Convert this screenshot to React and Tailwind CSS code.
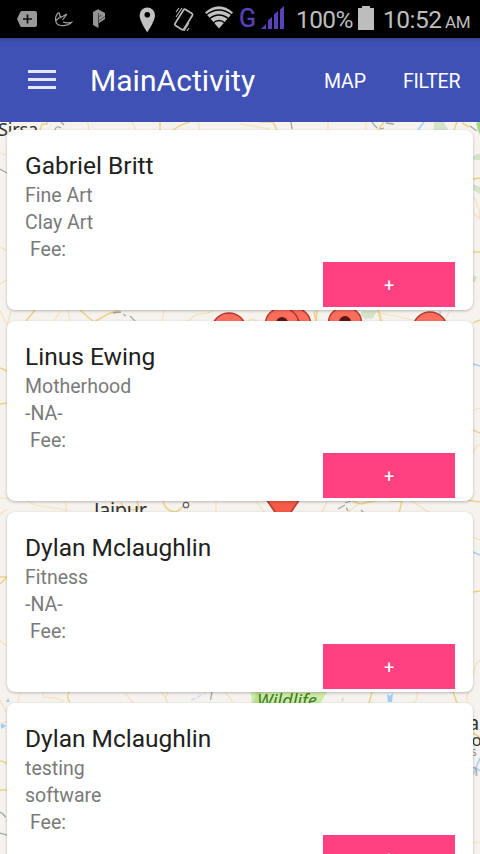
import React from "react";

const people = [
  { name: "Gabriel Britt", category: "Fine Art", detail: "Clay Art" },
  { name: "Linus Ewing", category: "Motherhood", detail: "-NA-" },
  { name: "Dylan Mclaughlin", category: "Fitness", detail: "-NA-" },
  { name: "Dylan Mclaughlin", category: "testing", detail: "software" },
];

function Pin({ x, y }) {
  return (
    <g transform={`translate(${x} ${y})`}>
      <path d="M0 46C-3 32-16.5 28-16.5 15.500A16.500 15.500 0 0 1 16.500 15.500C16.500 28 3 32 0 46Z" fill="#fb6e5e" stroke="#b43a2c" strokeWidth="1.500" />
      <circle cx="0" cy="15" r="6" fill="#5d1611" />
    </g>
  );
}

function MapBackground() {
  return (
    <svg className="absolute inset-0" width="480" height="732" viewBox="0 122 480 732" fill="none">
      <rect y="122" width="480" height="732" fill="#f6f2ee" />
      <path d="M477 122h3v11l-3-2zM473 157l4-3h3v6h-7zM473 184l7 3v7l-7-4zM473 275l4 2-2 5h-2zM434 122h10l4 8h-14zM362 311h15l-4 7-8 1-5-4z" fill="#d3e4ca" />
      <path d="M476 123l4-1v13z" fill="#a6d68a" />
      <path d="M251 692h76l-8 14h-67z" fill="#cfe9a9" />
      <path d="M256 692h7l-4 5 3 9h-9z" fill="#b9df93" />
      <path d="M341 700l3-3-1 5z" fill="#c7e2b9" />
      <g stroke="#f5e2bd" strokeWidth="1.200">
        <path d="M87 122q3 4 1 8M132 122l4 8M198 122l2 8M240 124l30 5M328 122v8M366 122v8M0 153l7 2M0 247l7 4M0 311l7 14M11 311l-4 14M0 284l7-4M61 311l-9 12M68 310l2 12M164 310l-2 12M187 322l8-7 13-2 7-4M247 322l5-3 8 3M375 312l30 6 15 4M380 311l2 10M450 311l-6 10M0 498l25 2 10 5 32 5M65 500l2 12M0 514l7-5M216 501v11M256 501l9 12M327 501l-5 11M348 512l10-8 20-3M412 501l18 12M473 537l7 3M20 693l-2 9M43 692l1 5 12 1 8 3M125 693l8 10M162 692l6 11M168 692l-3 8M225 692l8 10M417 692v7l-3 4M468 692q-2 5-1 11M473 675q2-12 7-15M473 213l7 6q-1-15-7-23M473 410l7-2M473 454q2-8 7-10M0 641l7 5M0 700l7 13M0 725l7-4M473 843l7-1" />
      </g>
      <g stroke="#ecd38c" strokeWidth="1.500">
        <path d="M40 130l2-6h5v-2M160 122v8M173 130q8-6 17-8M260 122h13l4 8M378 130l6-8M457 122l-3 8M462 123l7 4M473 179l7-1M473 252h7M35 310l-9 11M80 310l14 12 14-8 11-4M314 311l2 11M317 310l-1 12M378 310l3 12M473 323l7-3M0 368l7 3M0 404l7-1M121 502l3 7M137 501l2 7q-6 4-12-1M163 500q1 10 12 12 6-2 8-6M352 501l9 3 17-4M390 501h12l-3 12M465 500l15 2M473 430l7 3M0 577h7l-7 7M69 692q-3 6 1 10M372 692l-3 11M453 692l4 11M473 592l7-1M473 733l7 4M0 761q4 0 7 3M0 790h7" />
      </g>
      <g stroke="#a5a5a5" strokeWidth="1.300" strokeDasharray="8 3">
        <path d="M0 169l7 4M61 122l3 3M55 130q1-5 6-2M291 122l1 7M372 122q5 9 12 6M386 123l8 1M470 126l8 6M113 313l7-1 6 4M130 316l6 6M338 509l7-4 3 6M345 503l6-2M361 510l3 3M212 692l-2 11M0 812q5 2 7 9M0 833l7 2" />
      </g>
      <path d="M418 130l6-8M440 311v8M473 364l7 2M473 552l7 3M473 775l7-17M480 771l-5-4" stroke="#a9cffb" strokeWidth="1.600" />
      <path d="M191 700l7-3 7-4" stroke="#cfe1f8" strokeWidth="1.600" strokeDasharray="5 2" />
      <path d="M387 694l1 8h4l1-9-3 3zM6 702l2-4 2 4zM1 723l5 3-5 3z" fill="#9ecbfb" />
      <circle cx="186" cy="505" r="2.700" fill="#fff" stroke="#666" strokeWidth="1.300" />
      <g fontFamily="Noto Sans, sans-serif" fill="#333">
        <text x="-2" y="136" fontSize="18" textLength="40">Sirsa</text>
        <text x="94" y="517" fontSize="20" textLength="53">Jaipur</text>
        <text x="257" y="706.500" fontSize="18.500" fontStyle="italic" fill="#38801b" textLength="60" lengthAdjust="spacingAndGlyphs">Wildlife</text>
        <text x="468" y="729.500" fontSize="20">a</text>
        <text x="471.500" y="746" fontSize="17">o</text>
        <text x="471" y="756" fontSize="12" fill="#999">s</text>
        <text x="468" y="776" fontSize="17" fill="#aaa">n</text>
      </g>
      <Pin x={229} y={313} />
      <Pin x={294} y={308} />
      <Pin x={282} y={308} />
      <Pin x={345} y={307} />
      <Pin x={430} y={312} />
      <path d="M266 499l11 16h12l11-16z" fill="#f65b49" stroke="#b43a2c" strokeWidth="1.500" />
    </svg>
  );
}

function StatusBar() {
  return (
    <div className="flex h-[38px] w-full shrink-0 bg-black">
      <svg width="288" height="38" viewBox="0 0 288 38" fill="none" className="shrink-0">
        <path d="M22 11h13q2 0 2 2v12q0 2-2 2H22q-1.500 0-2-1.500L17 19l3-6.500q.5-1.500 2-1.500z" fill="#999" />
        <path d="M23 19h9M27.500 14.500v9" stroke="#111" strokeWidth="1.700" />
        <path d="M58.500 12.500C54 17 54.500 25 61 25.500c5 .3 9-1.500 10.500-3.200-3 .8-6 .6-8.500-.3M59 12.500l1.500 5 6.500-3.500-4.500 6M56 20.500l3.500-3" stroke="#a0a0a0" strokeWidth="1.200" />
        <path d="M93 12l5.500-3v19l-5.500-3zM98.500 9.500l6.500 3.500v6l-6.500 4.500z" fill="#959595" />
        <path d="M98.500 13v12M98.500 17l3-2M98.500 21l6-4.500" stroke="#333" strokeWidth=".8" />
        <path fillRule="evenodd" d="M147.300 7.500a7.700 7.700 0 0 0-7.700 7.700c0 6 7.700 17 7.700 17s7.700-11 7.700-17a7.700 7.700 0 0 0-7.700-7.700zm0 4.400a2.800 2.800 0 1 1 0 5.600 2.800 2.800 0 0 1 0-5.600z" fill="#c2c2c2" />
        <g stroke="#bbb">
          <rect x="-5.200" y="-9.500" width="10.400" height="19" rx="1.500" transform="translate(183.700 19.500) rotate(32)" strokeWidth="1.700" />
          <path d="M176 17l6-9M176 12l3-4M184 31l5-8M187 31l2-3" strokeWidth="1.100" />
        </g>
        <path d="M205 12.500Q219 0 233 12.500L219 28.500z" fill="#c2c2c2" />
        <path d="M206 15q13-10 26 0M209 19q10-8 20 0M213 23q6-5 12 0" stroke="#000" strokeWidth="1.300" />
        <path d="M261 29l5-5v5zM268 29v-8.500l4-3.500v12zM274 29V14.500l4-3.500v18zM280 29V9.500l4-3.500v23z" fill="#5b42bb" />
        <text x="239" y="27" fontFamily="Roboto, sans-serif" fontSize="25" fill="#5b42bb" stroke="#5b42bb" strokeWidth=".3" textLength="17" lengthAdjust="spacingAndGlyphs">G</text>
      </svg>
      <div className="flex h-[38px] items-baseline whitespace-pre pl-[8px] pt-[4px] text-[24.500px] leading-[30px] text-[#bdbdbd]">
        <span className="w-[62px] tracking-[-0.6px]">100%</span>
        <svg width="16" height="24" viewBox="0 0 16 24" className="relative top-0.5 shrink-0"><path d="M4 0h8v2h4v22H0V2h4z" fill="#bdbdbd" /></svg>
        <span className="ml-[9px] w-[60px] tracking-[-0.5px]">10:52</span>
        <span className="ml-0.5 text-[17px] tracking-[-0.3px]">AM</span>
      </div>
    </div>
  );
}

function Card({ person }) {
  return (
    <article className="flex h-[180px] shrink-0 flex-col rounded-[8px] bg-white px-[18px] shadow-[0_1px_3px_rgba(0,0,0,0.25)]">
      <h2 className="mt-[20px] h-[32px] whitespace-nowrap text-[24.500px] leading-[31px] text-[#212121]">{person.name}</h2>
      <div className="text-[19.500px] leading-[27px] text-[#7a7a7a]">
        <p>{person.category}</p>
        <p>{person.detail}</p>
        <p className="pl-[5px]">Fee:</p>
      </div>
      <button className="-mt-px h-[45px] w-[132px] shrink-0 self-end bg-[#ff4081] pt-[3px] text-[18px] leading-none text-white">+</button>
    </article>
  );
}

export default function App() {
  return (
    <div className="flex h-[854px] w-[480px] flex-col overflow-hidden bg-[#f6f2ee] font-['Roboto',sans-serif]">
      <StatusBar />
      <header className="flex h-[84px] shrink-0 items-center bg-[#3f51b5] bg-[linear-gradient(#374698,#3f51b5_5px)] text-white">
        <div className="mb-0.5 ml-7 flex w-7 flex-col gap-[5px]">
          <span className="h-[3px] bg-[#e4e7f6]" />
          <span className="h-[3px] bg-[#e4e7f6]" />
          <span className="h-[3px] bg-[#e4e7f6]" />
        </div>
        <h1 className="ml-[34px] mt-0.5 w-[234px] text-[30px] leading-9 tracking-[0.05px]">MainActivity</h1>
        <span className="mt-[3px] w-[79px] text-[19.500px] tracking-[-0.1px]">MAP</span>
        <span className="mt-[3px] text-[19.500px] tracking-[-0.25px]">FILTER</span>
      </header>
      <main className="relative h-[732px] shrink-0 overflow-hidden">
        <MapBackground />
        <div className="relative flex flex-col gap-[11px] px-[7px] pt-2">
          {people.map((person, index) => <Card key={index} person={person} />)}
        </div>
      </main>
    </div>
  );
}
